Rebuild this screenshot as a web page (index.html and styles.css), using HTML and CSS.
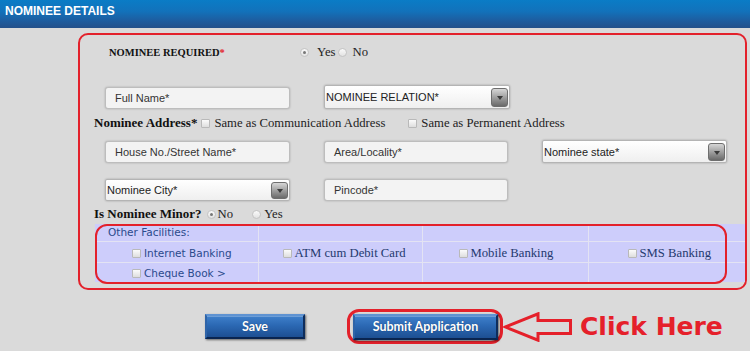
FILE: index.html
```html
<!DOCTYPE html>
<html lang="en">
<head>
<meta charset="utf-8">
<title>Nominee Details</title>
<link rel="stylesheet" href="styles.css">
</head>
<body>
<header class="titlebar">NOMINEE DETAILS</header>
<main class="page">
  <section class="panel">
    <div class="required">
      <span class="required-label">NOMINEE REQUIRED<span class="star">*</span></span>
      <span class="radio checked r-yes"></span><span class="opt">Yes</span>
      <span class="radio r-no"></span><span class="opt">No</span>
    </div>

    <div class="grid row1">
      <div class="field">Full Name*</div>
      <div class="select tall"><span class="select-text">NOMINEE RELATION*</span><span class="select-btn"></span></div>
    </div>

    <div class="line addr">
      <span class="bold-label">Nominee Address*</span>
      <span class="check c-comm"></span><span class="opt">Same as Communication Address</span>
      <span class="check c-perm"></span><span class="opt">Same as Permanent Address</span>
    </div>

    <div class="grid row2">
      <div class="field">House No./Street Name*</div>
      <div class="field">Area/Locality*</div>
      <div class="select mid"><span class="select-text">Nominee state*</span><span class="select-btn"></span></div>
    </div>

    <div class="grid row3">
      <div class="select"><span class="select-text">Nominee City*</span><span class="select-btn"></span></div>
      <div class="field">Pincode*</div>
    </div>

    <div class="line minor">
      <span class="bold-label">Is Nominee Minor?</span>
      <span class="radio checked m-no"></span><span class="opt">No</span>
      <span class="radio m-yes"></span><span class="opt">Yes</span>
    </div>

    <div class="facilities">
      <table class="fac-table">
        <tr class="fr1">
          <td class="sans head-cell">Other Facilities:</td><td></td><td></td><td></td>
        </tr>
        <tr class="fr2">
          <td class="c1"><span class="check"></span><span class="sans">Internet Banking</span></td>
          <td class="c2"><span class="check"></span><span class="serif">ATM cum Debit Card</span></td>
          <td class="c3"><span class="check"></span><span class="serif">Mobile Banking</span></td>
          <td class="c4"><span class="check"></span><span class="serif">SMS Banking</span></td>
        </tr>
        <tr class="fr3">
          <td class="c1"><span class="check"></span><span class="sans">Cheque Book &gt;</span></td>
          <td></td><td></td><td></td>
        </tr>
      </table>
      <div class="fac-ring"></div>
    </div>
  </section>

  <div class="actions">
    <button class="btn btn-save">Save</button>
    <div class="ring">
      <button class="btn btn-submit">Submit Application</button>
    </div>
    <svg class="arrow" width="69" height="30" viewBox="0 0 69 30">
      <path d="M2.5 15 L35 1.8 L35 8.5 L67.5 8.5 L67.5 21.5 L35 21.5 L35 28.2 Z" fill="none" stroke="#e5202a" stroke-width="3" stroke-linejoin="miter"/>
    </svg>
    <span class="click-here">Click Here</span>
  </div>
</main>
</body>
</html>
```

FILE: styles.css
```css
* { box-sizing: border-box; }

html, body {
  margin: 0;
  padding: 0;
}

body {
  width: 750px;
  height: 351px;
  overflow: hidden;
  background: #dadada;
  font-family: "Liberation Serif", "Times New Roman", serif;
  color: #111;
}

.titlebar {
  height: 28px;
  padding: 4px 0 0 5px;
  font: bold 12px/14px "Liberation Sans", Arial, sans-serif;
  color: #fff;
  background: linear-gradient(#0a7cc6 0%, #1272bb 40%, #1e5c9e 75%, #24508a 100%);
}

.panel {
  margin: 5px 0 0 78px;
  width: 669px;
  height: 257px;
  border: 2px solid #e3212b;
  border-radius: 10px;
  padding-top: 10px;
}

/* radios & checks */
.radio {
  display: inline-block;
  width: 9px;
  height: 9px;
  border-radius: 50%;
  border: 1px solid #c4c4c4;
  background: linear-gradient(#fafafa, #e2e2e2);
  position: relative;
  flex: none;
}
.radio.checked::after {
  content: "";
  position: absolute;
  left: 2px;
  top: 2px;
  width: 3px;
  height: 3px;
  border-radius: 50%;
  background: #777;
}
.check {
  display: inline-block;
  width: 9px;
  height: 9px;
  border: 1px solid #b9b9b9;
  border-radius: 1px;
  background: linear-gradient(#fbfbfb, #dedede);
  flex: none;
}

.opt {
  font-size: 12.7px;
  line-height: 14px;
  color: #222;
}

.required {
  display: flex;
  align-items: center;
  height: 14px;
  padding-left: 29px;
}
.required-label {
  width: 191px;
  font-weight: bold;
  font-size: 10.5px;
  color: #111;
}
.star { color: #e3212b; }
.r-yes { margin-right: 8px; }
.r-no { margin: 0 5px 0 3px; }

.grid {
  display: grid;
  grid-template-columns: 185px 184px 185px;
  column-gap: 34px;
  margin-left: 25px;
  align-items: end;
}
.row1 { margin-top: 26px; }
.row2 { margin-top: 10px; }
.row3 { margin-top: 16px; }

.field {
  height: 22px;
  padding-left: 9px;
  background: #f3f3f3;
  border: 1px solid #bdbdbd;
  border-radius: 3px;
  box-shadow: 0 0 2px rgba(0, 0, 0, 0.25);
  font: 11px/20px "Liberation Sans", Arial, sans-serif;
  color: #333;
}

.select {
  height: 22px;
  display: flex;
  align-items: center;
  justify-content: space-between;
  padding: 0 1px 0 1px;
  background: linear-gradient(#ffffff, #efefef);
  border: 1px solid #b4b4b4;
  border-radius: 2px;
  box-shadow: 0 0 2px rgba(0, 0, 0, 0.3);
  font: 11px "Liberation Sans", Arial, sans-serif;
  color: #222;
}
.select.tall { height: 24px; width: 186px; }
.select.mid { height: 23px; }
.select-btn {
  width: 17px;
  height: calc(100% - 3px);
  border-radius: 3px;
  border: 1px solid #6e6e6e;
  background: linear-gradient(#d6d6d6, #9a9a9a 55%, #6a6a6a);
  position: relative;
}
.select-btn::after {
  content: "";
  position: absolute;
  left: 50%;
  top: 50%;
  margin: -1px 0 0 -3px;
  border-left: 3px solid transparent;
  border-right: 3px solid transparent;
  border-top: 4px solid #3a3a3a;
}

.line {
  display: flex;
  align-items: center;
  height: 14px;
  padding-left: 14px;
}
.bold-label {
  font-weight: bold;
  font-size: 13px;
  color: #111;
}
.addr { margin-top: 7px; }
.c-comm { margin: 0 4px 0 4px; }
.c-perm { margin: 0 4px 0 23px; }

.minor { margin-top: 6px; }
.m-no { margin: 0 2px 0 5px; }
.m-yes { margin: 0 3px 0 19px; }

.facilities {
  position: relative;
  margin: 3px 0 0 15px;
  width: 650px;
  height: 60px;
}
.fac-table {
  width: 650px;
  border-collapse: collapse;
  background: #cdcdfb;
  table-layout: fixed;
}
.fac-table td {
  padding: 0;
  border: 1px solid #e3e3f3;
  white-space: nowrap;
  vertical-align: middle;
}
.fac-table tr:first-child td { border-top: none; }
.fac-table tr:last-child td { border-bottom: none; }
.fac-table td:first-child { border-left: none; width: 163px; }
.fac-table td:nth-child(2) { width: 164px; }
.fac-table td:nth-child(3) { width: 166px; }
.fac-table td:last-child { border-right: none; }
.fr1 td { height: 17px; }
.fr2 td { height: 21px; }
.fr3 td { height: 20px; }
.head-cell { padding-left: 13px !important; }
.fac-table .c1 { padding-left: 37px; }
.fac-table .c2 { padding-left: 24px; }
.fac-table .c3 { padding-left: 36px; }
.fac-table .c4 { padding-left: 39px; }
.fac-table .check { vertical-align: -1px; margin-right: 3px; }
.sans {
  font: 10.5px "DejaVu Sans", Verdana, sans-serif;
  color: #2a4a8c;
}
.serif {
  font: 12.7px "Liberation Serif", "Times New Roman", serif;
  color: #24396e;
}

.fac-ring {
  position: absolute;
  left: 0;
  top: 0;
  width: 632px;
  height: 60px;
  border: 2.5px solid #e3212b;
  border-radius: 12px;
  pointer-events: none;
}

.actions {
  display: flex;
  align-items: center;
  height: 35px;
  margin-top: 19px;
  padding-left: 205px;
}

.btn {
  font: bold 12.5px "Lato", "Liberation Sans", sans-serif;
  color: #fff;
  padding: 0;
  border-style: solid;
  border-width: 2px;
  border-color: #5f93d2 #0e2d5c #0a2550 #2f64a8;
  background: linear-gradient(#3f80cb 0%, #2b68b3 45%, #1d4f92 100%);
  box-shadow: 1px 1px 2px rgba(0, 0, 0, 0.55), inset 0 1px 0 rgba(255, 255, 255, 0.25);
  text-shadow: 0 0 1px rgba(0, 0, 0, 0.4);
}
.btn-save { width: 100px; height: 25px; }
.btn-submit { width: 145px; height: 26px; }

.ring {
  margin-left: 42px;
  width: 156px;
  height: 35px;
  border: 3px solid #e3212b;
  border-radius: 12px;
  display: flex;
  align-items: center;
  padding-left: 3px;
}

.arrow { flex: none; display: block; }

.click-here {
  margin-left: 8px;
  font: bold 25px "DejaVu Sans", Verdana, sans-serif;
  color: #e5202a;
  line-height: 30px;
}
```
